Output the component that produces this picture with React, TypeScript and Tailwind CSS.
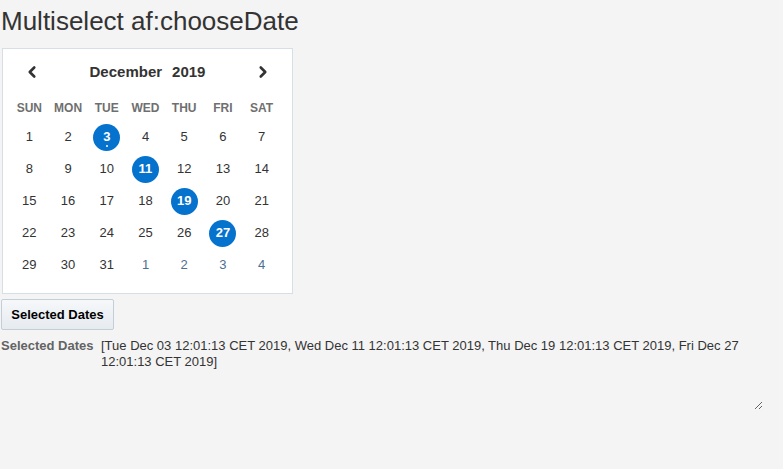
import { ChevronLeft, ChevronRight } from "lucide-react";

const WEEKDAYS = ["SUN", "MON", "TUE", "WED", "THU", "FRI", "SAT"];

// December 2019 starts on a Sunday; the last row spills into January
const WEEKS: { day: number; current: boolean }[][] = [
  [1, 2, 3, 4, 5, 6, 7],
  [8, 9, 10, 11, 12, 13, 14],
  [15, 16, 17, 18, 19, 20, 21],
  [22, 23, 24, 25, 26, 27, 28],
  [29, 30, 31, 1, 2, 3, 4],
].map((row, r) => row.map((day, i) => ({ day, current: !(r === 4 && i > 2) })));

const SELECTED = [3, 11, 19, 27];

const selectedText =
  "[Tue Dec 03 12:01:13 CET 2019, Wed Dec 11 12:01:13 CET 2019, Thu Dec 19 12:01:13 CET 2019, Fri Dec 27 12:01:13 CET 2019]";

export default function App() {
  return (
    <div className="min-h-[469px] w-full bg-[#f4f4f4] text-[#333333] font-['Liberation_Sans',Arial,sans-serif]">
      <h1 className="pl-[1px] pt-[6px] text-[26px] leading-[30px] font-normal">Multiselect af:chooseDate</h1>

      {/* Calendar */}
      <div className="ml-[2px] mt-[12px] w-[291px] h-[246px] bg-white border border-[#d6dfe6] pl-[7px] pr-[11px]">
        <div className="flex items-center justify-between h-[44px] pt-[2px] pl-[13px] pr-[9px]">
          <ChevronLeft className="w-[18px] h-[18px] text-[#333]" strokeWidth={3.5} />
          <div className="text-[15px] font-bold text-[#333] flex gap-[10px]">
            <span>December</span>
            <span>2019</span>
          </div>
          <ChevronRight className="w-[18px] h-[18px] text-[#333]" strokeWidth={3.5} />
        </div>

        <div className="grid grid-cols-7 mt-[4px]">
          {WEEKDAYS.map((d) => (
            <div key={d} className="h-[22px] flex items-center justify-center text-[12px] font-bold text-[#6f6f6f]">
              {d}
            </div>
          ))}
        </div>

        <div className="mt-[2px]">
          {WEEKS.map((row, r) => (
            <div key={r} className="grid grid-cols-7 h-[32px]">
              {row.map(({ day, current }) => {
                const sel = current && SELECTED.includes(day);
                return (
                  <div key={`${r}-${day}`} className="flex items-center justify-center">
                    {sel ? (
                      <span className="relative w-[27px] h-[27px] rounded-full bg-[#0572ce] text-white text-[13px] font-bold flex items-center justify-center">
                        {day}
                        {day === 3 && (
                          <span className="absolute bottom-[4px] left-1/2 -translate-x-1/2 w-[2px] h-[2px] bg-white rounded-full" />
                        )}
                      </span>
                    ) : (
                      <span className={`text-[13px] ${current ? "text-[#333]" : "text-[#4f6f8f]"}`}>{day}</span>
                    )}
                  </div>
                );
              })}
            </div>
          ))}
        </div>
      </div>

      {/* Command button */}
      <button className="ml-[1px] mt-[5px] h-[31px] w-[113px] rounded-[2px] border border-[#c4ced7] bg-gradient-to-b from-[#f6f8fa] to-[#e6ebf0] text-[13px] font-bold text-[#000]">
        Selected Dates
      </button>

      {/* Output field */}
      <div className="flex mt-[6px] pl-[1px]">
        <label className="w-[100px] pt-[2px] text-[13px] font-bold text-[#636363] leading-[16px]">Selected Dates</label>
        <textarea
          readOnly
          value={selectedText}
          className="w-[662px] h-[74px] bg-transparent border-0 outline-none p-0 pt-[2px] text-[13px] leading-[16px] text-[#333] resize"
        />
      </div>
    </div>
  );
}
